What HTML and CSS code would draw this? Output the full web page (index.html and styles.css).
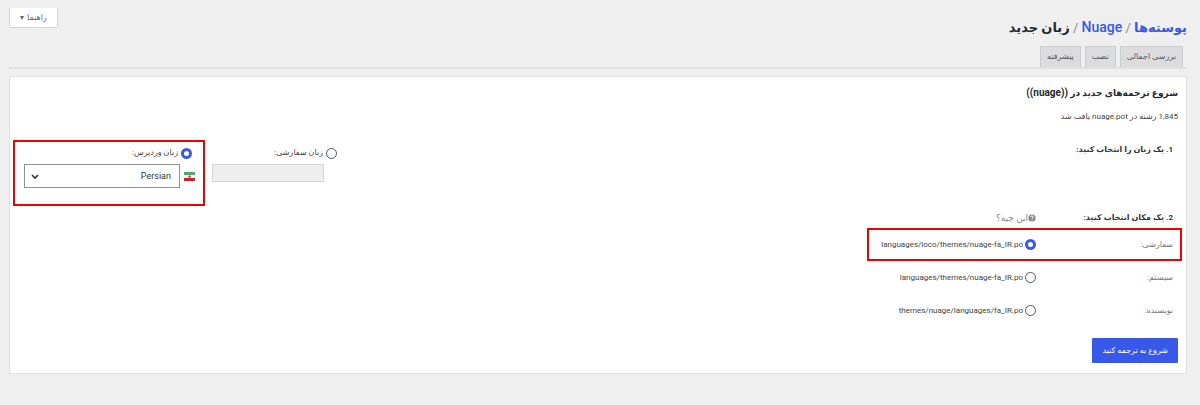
FILE: index.html
```
<!DOCTYPE html>
<html lang="fa" dir="rtl">
<head>
<meta charset="utf-8">
<title>زبان جدید</title>
<link rel="stylesheet" href="styles.css">
</head>
<body>
<header class="top">
  <h1 class="crumbs"><a href="#">پوسته‌ها</a> <span class="sep">/</span> <a class="latin" href="#">Nuage</a> <span class="sep">/</span> زبان جدید</h1>
  <button class="help" type="button">راهنما <span class="caret"></span></button>
</header>
<nav class="tabs">
  <a class="tab" href="#">بررسی اجمالی</a>
  <a class="tab" href="#">نصب</a>
  <a class="tab" href="#">پیشرفته</a>
</nav>
<main class="panel">
  <h2 class="heading">شروع ترجمه‌های جدید در <bdi class="name">((nuage))</bdi></h2>
  <p class="summary">1,845 رشته در nuage.pot یافت شد</p>
  <form>
    <section class="language">
      <h3 class="step">1. یک زبان را انتخاب کنید:</h3>
      <div class="choices">
        <div class="custom">
          <label class="option"><input class="radio" type="radio" name="lang"><span>زبان سفارشی:</span></label>
          <input class="code" type="text" aria-label="زبان سفارشی" disabled>
        </div>
        <div class="wordpress">
          <label class="option"><input class="radio" type="radio" name="lang" checked><span>زبان وردپرس:</span></label>
          <div class="picker">
            <svg class="flag" viewBox="0 0 11 9" aria-hidden="true"><path fill="#fff" d="M0 0h11v9H0z"/><path fill="#4fa873" d="M0 0h11v3H0z"/><path fill="#c91f24" d="M0 6h11v3H0z"/><path fill="#d8575a" d="M5 3h1v3H5zM4 4h3v1H4z"/></svg>
            <span class="selectbox">
              <select class="select" aria-label="زبان وردپرس"><option>Persian</option></select>
              <svg class="chevron" viewBox="0 0 8 6" aria-hidden="true"><path d="M1 1l3 3 3-3" fill="none" stroke="#32373c" stroke-width="1.6"/></svg>
            </span>
          </div>
        </div>
      </div>
    </section>
    <section class="location">
      <div class="row">
        <h3 class="step">2. یک مکان انتخاب کنید:</h3>
        <a class="hint" href="#"><svg class="question" viewBox="0 0 10 10" aria-hidden="true"><circle cx="5" cy="5" r="4.5" fill="#858585"/><path d="M3.3 3.9C3.3 2 6.7 2 6.7 3.9 6.7 5 5 5 5 6.3M5 7v1.1" fill="none" stroke="#fff" stroke-width="1.2"/></svg><span>این چیه؟</span></a>
      </div>
      <div class="row marked">
        <span class="place">سفارشی:</span>
        <label class="option file"><input class="radio" type="radio" name="path" checked><span>languages/loco/themes/nuage-fa_IR.po</span></label>
      </div>
      <div class="row">
        <span class="place">سیستم:</span>
        <label class="option file"><input class="radio" type="radio" name="path"><span>languages/themes/nuage-fa_IR.po</span></label>
      </div>
      <div class="row">
        <span class="place">نویسنده:</span>
        <label class="option file"><input class="radio" type="radio" name="path"><span>themes/nuage/languages/fa_IR.po</span></label>
      </div>
    </section>
    <button class="submit" type="submit">شروع به ترجمه کنید</button>
  </form>
</main>
</body>
</html>
```
FILE: styles.css
```
* { box-sizing: border-box; }
body {
  margin: 0;
  padding: 8px 13px 31px 9px;
  background: #efefef;
  color: #444;
  font: 8px/12px Roboto, "DejaVu Sans", sans-serif;
}
h1, h2, h3, p { margin: 0; }
a { text-decoration: none; }
button, input, select { font: inherit; }

.top {
  display: flex;
  justify-content: space-between;
  align-items: flex-start;
}
.crumbs {
  padding-top: 8px;
  font-size: 13px;
  line-height: 23px;
  font-weight: 700;
  color: #23282d;
}
.crumbs a { color: #3858e9; }
.crumbs .latin { font-size: 14px; font-weight: 500; }
.sep { color: #8a8a8a; font-weight: 400; }
.help {
  width: 49px;
  height: 20px;
  padding: 0;
  border: 1px solid #d2d4d6;
  border-top: 0;
  border-radius: 0 0 2px 2px;
  background: #fff;
  color: #62676c;
}
.caret {
  display: inline-block;
  margin-right: 1px;
  border: 2px solid transparent;
  border-top: 4px solid #62676c;
  border-bottom: 0;
}

.tabs {
  display: flex;
  gap: 4px;
  margin-top: 7px;
  padding-right: 4px;
  border-bottom: 2px solid #e0e0e0;
}
.tab {
  height: 21px;
  padding: 0 6px;
  border: 1px solid #ccc;
  border-bottom: 0;
  background: #dcdcde;
  color: #50575e;
  line-height: 20px;
}

.panel {
  margin-top: 7px;
  padding: 7px 8px 10px 14px;
  background: #fff;
  border: 1px solid #e0e0e0;
}
.heading {
  font-size: 9px;
  line-height: 18px;
  font-weight: 700;
  color: #23282d;
}
.name { font-size: 10px; }
.summary { margin-top: 9px; }

.language {
  display: flex;
  justify-content: space-between;
  padding-right: 5px;
  margin-top: 21px;
}
.step {
  font-size: 8px;
  line-height: 12px;
  font-weight: 700;
  color: #32373c;
}
.choices { display: flex; gap: 17px; }
.option {
  display: flex;
  align-items: center;
  gap: 3px;
}
.radio {
  appearance: none;
  flex: none;
  width: 11px;
  height: 11px;
  margin: 0;
  border: 1px solid #50575e;
  border-radius: 50%;
  background: #fff;
}
.radio:checked { border: 3px solid #3858e9; }
.custom { width: 125px; padding-top: 3px; }
.code {
  display: block;
  width: 112px;
  height: 18px;
  margin: 5px 13px 0 0;
  border: 1px solid #d5d5d5;
  background: #eee;
}
.wordpress {
  position: relative;
  width: 171px;
  padding-top: 3px;
}
.wordpress .option { padding-right: 3px; }
.wordpress::after,
.marked::after {
  content: "";
  position: absolute;
  border: 2px solid #f00000;
  pointer-events: none;
}
.wordpress::after { inset: -4px -10px -18px -11px; }
.picker {
  display: flex;
  align-items: center;
  gap: 4px;
  margin-top: 5px;
}
.flag { width: 11px; height: 9px; }
.selectbox { position: relative; flex: 1; }
.select {
  appearance: none;
  display: block;
  width: 100%;
  height: 24px;
  padding: 0 8px;
  border: 1px solid #8c8f94;
  border-radius: 0;
  background: #fff;
  color: #32373c;
  font-size: 9px;
}
.chevron {
  position: absolute;
  left: 7px;
  top: 10px;
  width: 8px;
  height: 6px;
}

.location { margin-top: 19px; }
.row {
  position: relative;
  display: grid;
  grid-template-columns: 137px 1fr;
  align-items: center;
  height: 33px;
  padding-right: 5px;
}
.row:first-child { height: 21px; }
.marked::after { inset: 0 -4px 0 auto; width: 311px; }
.place { color: #72777c; }
.hint {
  display: flex;
  align-items: center;
  color: #858585;
  font-size: 9px;
}
.question { width: 8px; height: 8px; }
.file { gap: 2px; }
.submit {
  display: block;
  height: 25px;
  margin-top: 11px;
  padding: 0 10px;
  border: 0;
  border-radius: 1px;
  background: #3858e9;
  color: #fff;
  font-weight: 500;
}
```
